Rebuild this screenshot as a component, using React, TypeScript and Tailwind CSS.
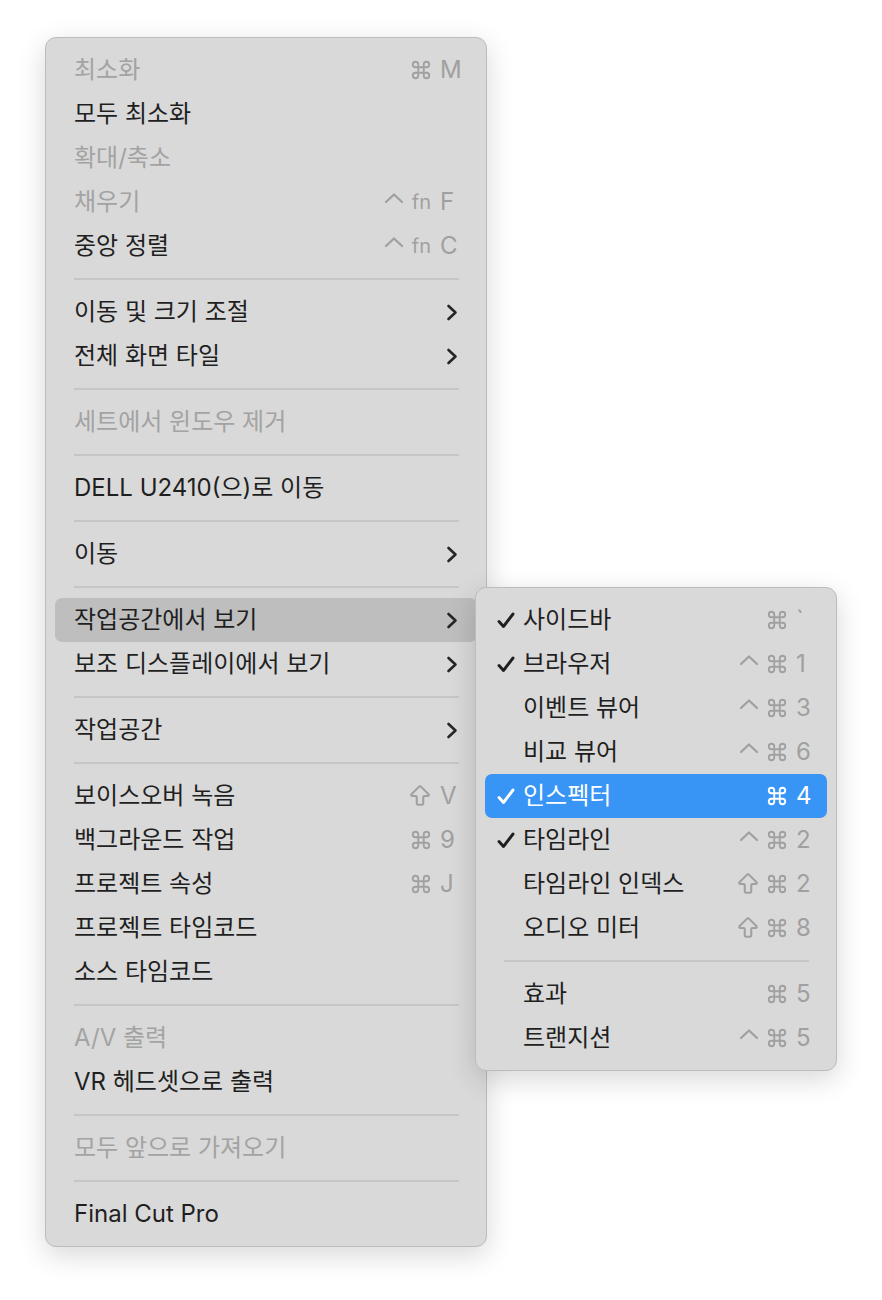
import React from 'react';
import { Command, ArrowBigUp } from 'lucide-react';

type Shortcut = { mods: string[]; key: string };
type Item =
  | 'sep'
  | {
      label: string;
      disabled?: boolean;
      shortcut?: Shortcut;
      submenu?: boolean;
      active?: boolean;
      checked?: boolean;
    };

const mainItems: Item[] = [
  { label: '최소화', disabled: true, shortcut: { mods: ['cmd'], key: 'M' } },
  { label: '모두 최소화' },
  { label: '확대/축소', disabled: true },
  { label: '채우기', disabled: true, shortcut: { mods: ['ctrl', 'fn'], key: 'F' } },
  { label: '중앙 정렬', shortcut: { mods: ['ctrl', 'fn'], key: 'C' } },
  'sep',
  { label: '이동 및 크기 조절', submenu: true },
  { label: '전체 화면 타일', submenu: true },
  'sep',
  { label: '세트에서 윈도우 제거', disabled: true },
  'sep',
  { label: 'DELL U2410(으)로 이동' },
  'sep',
  { label: '이동', submenu: true },
  'sep',
  { label: '작업공간에서 보기', submenu: true, active: true },
  { label: '보조 디스플레이에서 보기', submenu: true },
  'sep',
  { label: '작업공간', submenu: true },
  'sep',
  { label: '보이스오버 녹음', shortcut: { mods: ['shift'], key: 'V' } },
  { label: '백그라운드 작업', shortcut: { mods: ['cmd'], key: '9' } },
  { label: '프로젝트 속성', shortcut: { mods: ['cmd'], key: 'J' } },
  { label: '프로젝트 타임코드' },
  { label: '소스 타임코드' },
  'sep',
  { label: 'A/V 출력', disabled: true },
  { label: 'VR 헤드셋으로 출력' },
  'sep',
  { label: '모두 앞으로 가져오기', disabled: true },
  'sep',
  { label: 'Final Cut Pro' },
];

const subItems: Item[] = [
  { label: '사이드바', checked: true, shortcut: { mods: ['cmd'], key: '`' } },
  { label: '브라우저', checked: true, shortcut: { mods: ['ctrl', 'cmd'], key: '1' } },
  { label: '이벤트 뷰어', shortcut: { mods: ['ctrl', 'cmd'], key: '3' } },
  { label: '비교 뷰어', shortcut: { mods: ['ctrl', 'cmd'], key: '6' } },
  { label: '인스펙터', checked: true, active: true, shortcut: { mods: ['cmd'], key: '4' } },
  { label: '타임라인', checked: true, shortcut: { mods: ['ctrl', 'cmd'], key: '2' } },
  { label: '타임라인 인덱스', shortcut: { mods: ['shift', 'cmd'], key: '2' } },
  { label: '오디오 미터', shortcut: { mods: ['shift', 'cmd'], key: '8' } },
  'sep',
  { label: '효과', shortcut: { mods: ['cmd'], key: '5' } },
  { label: '트랜지션', shortcut: { mods: ['ctrl', 'cmd'], key: '5' } },
];

const Chevron = () => (
  <svg width="14" height="17" viewBox="0 0 14 17" fill="none">
    <path d="M3.5 2 L10.5 8.5 L3.5 15" stroke="#262626" strokeWidth="2.6" strokeLinecap="round" strokeLinejoin="round" />
  </svg>
);

const Check = ({ color }: { color: string }) => (
  <svg width="18" height="17" viewBox="0 0 18 17" fill="none">
    <path d="M2 9.5 L6.5 14.5 L16 2" stroke={color} strokeWidth="2.9" strokeLinecap="round" strokeLinejoin="round" />
  </svg>
);

const Caret = () => (
  <svg width="20" height="12" viewBox="0 0 20 12" fill="none" className="-mt-[8px]">
    <path d="M2 10 L10 2.5 L18 10" stroke="currentColor" strokeWidth="2.3" strokeLinecap="round" strokeLinejoin="round" />
  </svg>
);

const Mod = ({ m }: { m: string }) => {
  if (m === 'fn') return <span className="text-[20px] leading-none">fn</span>;
  if (m === 'ctrl') return <Caret />;
  if (m === 'shift') return <ArrowBigUp size={26} strokeWidth={1.9} className="-mx-[2px]" />;
  return <Command size={22} strokeWidth={2} className="-mx-[1px]" />;
};

const ShortcutView = ({ s, color, sub }: { s: Shortcut; color: string; sub?: boolean }) => (
  <div className={`flex items-center ${color}`}>
    <div className="flex items-center gap-[8px]">
      {s.mods.map((m, i) => (
        <Mod key={i} m={m} />
      ))}
    </div>
    <span className={`${sub ? 'w-[13px]' : 'w-[19px]'} ml-[9px] text-[24px] leading-none`}>{s.key}</span>
  </div>
);

const Separator = () => (
  <div className="h-[22px] flex items-center ml-[28px] mr-[27px]">
    <div className="h-[2px] w-full bg-[#c6c6c6]" />
  </div>
);

const MenuRow = ({ item, sub }: { item: Exclude<Item, 'sep'>; sub?: boolean }) => {
  const blue = sub && item.active;
  const rowBg = blue ? 'bg-[#3895f6]' : item.active ? 'bg-[#bebebe]' : '';
  const textColor = blue ? 'text-white' : item.disabled ? 'text-[#a3a3a3]' : 'text-[#1f1f1f]';
  const scColor = blue ? 'text-white' : 'text-[#a0a0a0]';
  return (
    <div className={`h-[44px] mx-[9px] rounded-[7px] flex items-center pr-[18px] ${sub ? 'pl-[12px]' : 'pl-[19px]'} ${rowBg}`}>
      {sub && (
        <div className="w-[26px] flex items-center">
          {item.checked && <Check color={blue ? '#ffffff' : '#1f1f1f'} />}
        </div>
      )}
      <span className={`flex-1 text-[24px] leading-none ${textColor}`}>{item.label}</span>
      {item.shortcut && <ShortcutView s={item.shortcut} color={scColor} sub={sub} />}
      {item.submenu && <Chevron />}
    </div>
  );
};

const Menu = ({ items, sub, className }: { items: Item[]; sub?: boolean; className: string }) => (
  <div
    className={`bg-[#d9d9d9] border border-[#bcbcbc] rounded-[11px] py-[10px] shadow-[0_8px_28px_rgba(0,0,0,0.16)] ${className}`}
  >
    {items.map((it, i) => (it === 'sep' ? <Separator key={i} /> : <MenuRow key={i} item={it} sub={sub} />))}
  </div>
);

export default function App() {
  return (
    <div className="relative w-[882px] h-[1300px] bg-white pl-[45px] pt-[37px] font-['Inter','Noto_Sans_CJK_KR',sans-serif]">
      <Menu items={mainItems} className="w-[442px]" />
      <Menu items={subItems} sub className="absolute left-[475px] top-[587px] w-[362px]" />
    </div>
  );
}
